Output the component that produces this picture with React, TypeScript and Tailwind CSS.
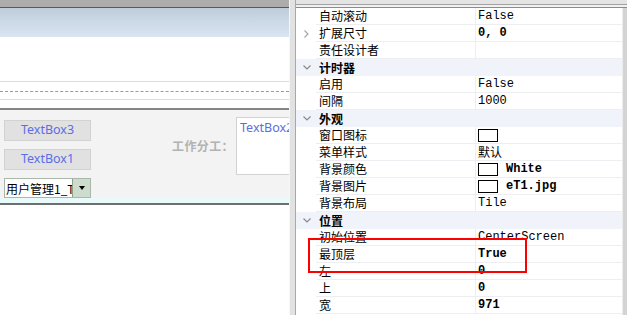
import React from 'react';

type Row =
  | { kind: 'header'; name: string }
  | { kind: 'prop'; name: string; value?: string; bold?: boolean; swatch?: boolean; expander?: boolean; cjk?: boolean };

const rows: Row[] = [
  { kind: 'prop', name: '自动滚动', value: 'False' },
  { kind: 'prop', name: '扩展尺寸', value: '0, 0', bold: true, expander: true },
  { kind: 'prop', name: '责任设计者' },
  { kind: 'header', name: '计时器' },
  { kind: 'prop', name: '启用', value: 'False' },
  { kind: 'prop', name: '间隔', value: '1000' },
  { kind: 'header', name: '外观' },
  { kind: 'prop', name: '窗口图标', swatch: true },
  { kind: 'prop', name: '菜单样式', value: '默认', cjk: true },
  { kind: 'prop', name: '背景颜色', value: 'White', bold: true, swatch: true },
  { kind: 'prop', name: '背景图片', value: 'eT1.jpg', bold: true, swatch: true },
  { kind: 'prop', name: '背景布局', value: 'Tile' },
  { kind: 'header', name: '位置' },
  { kind: 'prop', name: '初始位置', value: 'CenterScreen' },
  { kind: 'prop', name: '最顶层', value: 'True', bold: true },
  { kind: 'prop', name: '左', value: '0', bold: true },
  { kind: 'prop', name: '上', value: '0', bold: true },
  { kind: 'prop', name: '宽', value: '971', bold: true },
];

const cjk = "font-['SimSun','Noto_Sans_CJK_SC',sans-serif]";
const mono = "font-['Liberation_Mono','Noto_Sans_CJK_SC',monospace]";

function ChevronDown() {
  return (
    <svg width="8" height="5" viewBox="0 0 8 5">
      <polyline points="0.5,0.5 4,4 7.5,0.5" fill="none" stroke="#8a8a8a" strokeWidth="1.2" />
    </svg>
  );
}

function ChevronRight() {
  return (
    <svg width="5" height="8" viewBox="0 0 5 8">
      <polyline points="0.5,0.5 4,4 0.5,7.5" fill="none" stroke="#a8a8a8" strokeWidth="1.2" />
    </svg>
  );
}

function PropRow({ row }: { row: Row }) {
  if (row.kind === 'header') {
    return (
      <div className="flex h-[17px] bg-[#f0f4fa]">
        <div className="w-[20px] flex items-center justify-center pl-[1px]">
          <ChevronDown />
        </div>
        <div className={`flex-1 pl-[3px] text-[12px] leading-[17px] font-bold text-black ${cjk}`}>{row.name}</div>
      </div>
    );
  }
  return (
    <div className="flex h-[17px]">
      <div className="w-[20px] flex items-center justify-center pl-[1px]">
        {row.expander && <ChevronRight />}
      </div>
      <div className={`w-[159px] pl-[3px] border-b border-[#eceef2] text-[12px] leading-[16px] text-black ${cjk}`}>
        {row.name}
      </div>
      <div className="flex-1 flex items-center border-l border-b border-[#eceef2] pl-[2px]">
        {row.swatch && <div className="w-[20px] h-[13px] border border-black bg-white shrink-0 mr-[8px]" />}
        {row.value && (
          <span
            className={`text-[12px] leading-[16px] text-black ${row.cjk ? cjk : mono} ${row.bold ? 'font-bold' : ''}`}
          >
            {row.value}
          </span>
        )}
      </div>
    </div>
  );
}

export default function App() {
  return (
    <div className="w-[627px] h-[315px] flex overflow-hidden bg-white">
      {/* designer surface */}
      <div className="w-[289px] shrink-0 flex flex-col overflow-hidden">
        <div className="h-[7px] bg-[#adadad]" />
        <div className="h-[1px] bg-[#5a5a5a]" />
        <div className="h-[29px] bg-gradient-to-b from-[#bfcddb] to-[#d9e5f1]" />
        <div className="h-[44px] bg-white" />
        <div className="h-[1px] bg-[#dcdcdc]" />
        <div className="h-[9px] bg-white" />
        <div className="h-0 border-t border-dashed border-[#9a9a9a]" />
        <div className="h-[7px] bg-white" />
        <div className="h-[1px] bg-[#dcdcdc]" />
        <div className="h-[8px] bg-white" />
        <div className="h-[2px] bg-[#858585]" />
        <div className="h-[88px] bg-[#f3f3f3] flex pl-[4px] overflow-hidden">
          <div className="w-[87px] shrink-0 flex flex-col pt-[10px] gap-[8px]">
            <div className="h-[21px] bg-[#e1e1e1] border border-[#d2d2d2] flex items-center justify-center text-[12.5px] text-[#5b6ee6] font-['Noto_Sans',sans-serif]">
              TextBox3
            </div>
            <div className="h-[21px] bg-[#e1e1e1] border border-[#d2d2d2] flex items-center justify-center text-[12.5px] text-[#5b6ee6] font-['Noto_Sans',sans-serif]">
              TextBox1
            </div>
            <div className="h-[20px] flex border border-[#a9b8a9] bg-white">
              <div className={`w-[67px] overflow-hidden whitespace-nowrap text-[12px] leading-[19px] text-black pl-[1px] ${cjk}`}>
                用户管理1_T
              </div>
              <div className="flex-1 bg-[#cddccd] border-l border-[#8ca28c] flex items-center justify-center">
                <div className="w-0 h-0 border-l-[3px] border-r-[3px] border-t-[4px] border-l-transparent border-r-transparent border-t-black" />
              </div>
            </div>
          </div>
          <div className={`ml-[81px] mt-[27px] w-[59px] shrink-0 text-[12px] tracking-[0.4px] font-bold text-[#b2b2b2] whitespace-nowrap ${cjk}`}>
            工作分工：
          </div>
          <div className="ml-[5px] mt-[7px] w-[120px] h-[58px] shrink-0 bg-white border border-[#d2d2d2] pl-[3px] pt-[1px] text-[12.5px] text-[#5b6ee6] font-['Noto_Sans',sans-serif]">
            TextBox2
          </div>
        </div>
        <div className="h-[5px] bg-[#e9fafa]" />
        <div className="h-[2px] bg-[#6e6e6e]" />
        <div className="flex-1 bg-white" />
      </div>

      {/* splitter */}
      <div className="w-[1px] bg-[#f6f6f6]" />
      <div className="w-[5px] bg-[#e2e2e2]" />
      <div className="w-[1px] bg-[#a8a8a8]" />

      {/* property grid */}
      <div className="flex-1 flex flex-col relative">
        <div className="h-[8px] flex flex-col bg-[#e4e4e4]">
          <div className="h-[4px]" />
          <div className="h-[1px] bg-[#a0a0a0]" />
          <div className="h-[2px] bg-[#f0f0f0]" />
          <div className="h-[1px] bg-[#8c8c8c]" />
        </div>
        <div className="flex-1 flex">
          <div className="flex-1 flex flex-col">
            {rows.map((r, i) => (
              <PropRow key={i} row={r} />
            ))}
          </div>
          <div className="w-[5px] bg-[#d4d4d4] border-l border-[#ececec]" />
        </div>
        <div className="absolute left-[12px] top-[238px] w-[219px] h-[35px] border-2 border-[#ff0000]" />
      </div>
    </div>
  );
}
